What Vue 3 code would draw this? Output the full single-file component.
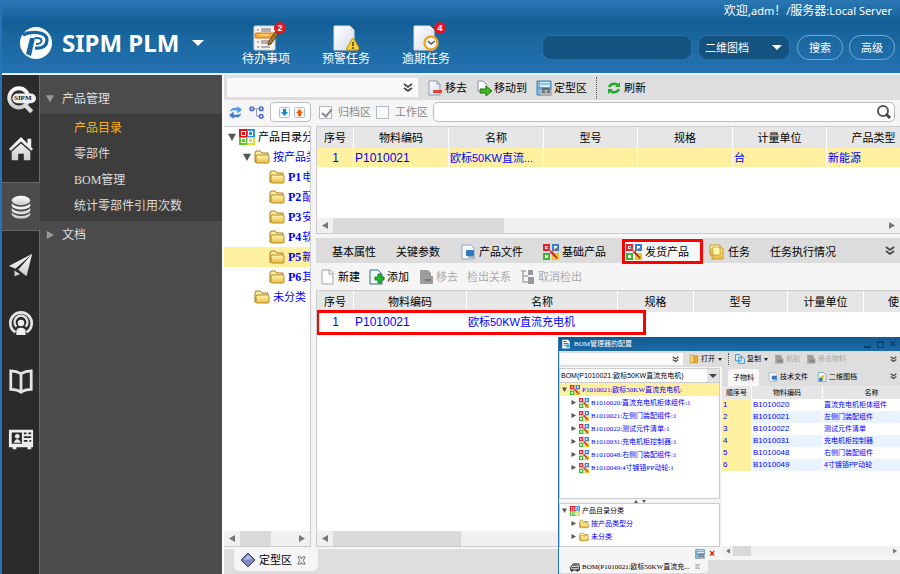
<script setup>
import { ref } from 'vue'

const shortcuts = [
  { label: '待办事项', icon: 'i-todo', count: 2 },
  { label: '预警任务', icon: 'i-warn' },
  { label: '逾期任务', icon: 'i-late', count: 4 },
]
const rail = ['search', 'home', 'data', 'plane', 'cast', 'book', 'card']
const railNames = ['检索', '首页', '数据', '发送', '广播', '手册', '名片']
const menu = ['产品目录', '零部件', 'BOM管理', '统计零部件引用次数']
const tools = [
  { label: '移去', icon: 'i-minus' },
  { label: '移动到', icon: 'i-moveto' },
  { label: '定型区', icon: 'i-disk' },
]
const tree = [
  { label: '产品目录分', level: 1, icon: 'i-grid', open: true, root: true },
  { label: '按产品类', level: 2, icon: 'i-folder', open: true },
  { code: 'P1', label: '电', level: 3, icon: 'i-folder' },
  { code: 'P2', label: '配', level: 3, icon: 'i-folder' },
  { code: 'P3', label: '安', level: 3, icon: 'i-folder' },
  { code: 'P4', label: '软', level: 3, icon: 'i-folder' },
  { code: 'P5', label: '新', level: 3, icon: 'i-folder', active: true },
  { code: 'P6', label: '其', level: 3, icon: 'i-folder' },
  { label: '未分类', level: 2, icon: 'i-folder' },
]
const tabs = [
  { label: '基本属性' },
  { label: '关键参数' },
  { label: '产品文件', icon: 'i-doc' },
  { label: '基础产品', icon: 'i-product' },
  { label: '发货产品', icon: 'i-product', active: true },
  { label: '任务', icon: 'i-task' },
  { label: '任务执行情况' },
]
const actions = [
  { label: '新建', icon: 'i-new' },
  { label: '添加', icon: 'i-add' },
  { label: '移去', icon: 'i-graypage', off: true },
  { label: '检出关系', off: true },
  { label: '取消检出', icon: 'i-graytree', off: true },
]
const bomTree = [
  'B1010020:直流充电机柜体组件:1',
  'B1010021:左侧门装配组件:1',
  'B1010022:测试元件清单:1',
  'B1010031:充电机柜控制器:1',
  'B1010048:右侧门装配组件:1',
  'B1010049:4寸镀铬PP动轮:1',
]
const bomRows = [
  ['B1010020', '直流充电机柜体组件'],
  ['B1010021', '左侧门装配组件'],
  ['B1010022', '测试元件清单'],
  ['B1010031', '充电机柜控制器'],
  ['B1010048', '右侧门装配组件'],
  ['B1010049', '4寸镀铬PP动轮'],
]
const archived = ref(true)
const working = ref(false)
</script>

<template>
  <svg class="sprite" width="0" height="0" aria-hidden="true">
    <defs>
      <linearGradient id="g-page" x1="0" y1="0" x2="1" y2="1"><stop offset="0" stop-color="#fff" /><stop offset="1" stop-color="#d5dde8" /></linearGradient>
      <linearGradient id="g-fold" x1="0" y1="0" x2="0" y2="1"><stop offset="0" stop-color="#fff7b8" /><stop offset="1" stop-color="#e9bd3f" /></linearGradient>
      <linearGradient id="g-rail" x1="0" y1="0" x2="0" y2="1"><stop offset="0" stop-color="#fff" /><stop offset="1" stop-color="#ccc" /></linearGradient>
    </defs>
    <symbol id="i-logo" viewBox="0 0 32 32">
      <circle cx="16" cy="16" r="16" fill="#fff" />
      <path d="M3 8C10 4 27 4 27 13c0 6-5 9-12 8" fill="none" stroke="#1566a3" stroke-width="3.200" />
      <path d="M10 11h5l-4 18-5-2z" fill="#1566a3" />
      <path d="M15 11c9-1 8 6 1 6" fill="none" stroke="#1566a3" stroke-width="2" />
      <path d="M2 7h9M4 5h5" stroke="#1566a3" stroke-dasharray="1 1" />
    </symbol>
    <symbol id="i-todo" viewBox="0 0 26 26">
      <rect x="1" y="1" width="21" height="24" rx="1" fill="#f5f3ee" stroke="#c9d3da" />
      <g stroke="#999" stroke-width="1.500"><path d="M4 5h2M8 4h10M8 6h10M4 17h2M8 16h9M8 18h9M4 22h2M8 22h9" /></g>
      <rect x="2" y="8" width="19" height="5" rx="1" fill="#f8a63a" stroke="#d17b18" /><path d="M6 10h10" stroke="#fff0b0" />
      <path d="M22 7l3 2-7 10-3 1 1-4z" fill="#a8782c" stroke="#5f4216" />
    </symbol>
    <symbol id="i-warn" viewBox="0 0 26 26">
      <path d="M1 1h16l4 4v20H1z" fill="url(#g-page)" stroke="#d8e0e5" /><path d="M17 1v5h4" fill="#d9e3ec" />
      <path d="M19 14q1-1 2 0l5 9q0 2-1 2H14q-1-1 0-2z" fill="#f8cf35" stroke="#c39310" /><path d="M20 17v4M20 22v2" stroke="#503e10" stroke-width="1.500" />
    </symbol>
    <symbol id="i-late" viewBox="0 0 26 26">
      <path d="M1 1h16l4 4v20H1z" fill="url(#g-page)" stroke="#d8e0e5" />
      <circle cx="18" cy="18" r="6.500" fill="#f7f9fb" stroke="#eda52e" stroke-width="2.400" /><path d="M15 16l3 3 4-3" fill="none" stroke="#555" stroke-width="1.500" />
    </symbol>
    <symbol id="r-search" viewBox="0 0 28 28">
      <circle cx="12" cy="12" r="9" fill="none" stroke="url(#g-rail)" stroke-width="3.600" /><path d="M18 19l6 6" stroke="#ddd" stroke-width="4" />
      <rect x="6" y="8" width="22" height="9" rx="4.500" fill="#eee" />
    </symbol>
    <symbol id="r-home" viewBox="0 0 28 28"><path d="M14 1L1 14l2 2L14 6l11 10 2-2-2-2V3h-4v5zM14 8l-10 9v9h7v-7h6v7h7v-9z" fill="url(#g-rail)" /></symbol>
    <symbol id="r-data" viewBox="0 0 28 28"><ellipse cx="14" cy="7" rx="10" ry="5" fill="url(#g-rail)" /><path d="M4 10c3 5 17 5 20 0v3c-2 5-18 5-20 0zM4 15c3 5 17 5 20 0v3c-2 5-18 5-20 0zM4 20c3 5 17 5 20 0v2c-2 6-18 6-20 0z" fill="url(#g-rail)" /></symbol>
    <symbol id="r-plane" viewBox="0 0 28 28"><path d="M26 2L1 15l7 3zM26 2L11 19l9 7zM7 20l6 4-6 2z" fill="url(#g-rail)" /></symbol>
    <symbol id="r-cast" viewBox="0 0 28 28"><g fill="none" stroke="#e4e4e4"><path d="M8 24a11.500 11.500 0 1 1 12 0" stroke-width="3" /><path d="M9 18a7 7 0 1 1 10 0" stroke-width="2.500" /></g><circle cx="14" cy="14" r="3.500" fill="#eee" /><path d="M9 27v-4q0-4 5-4t5 4v4z" fill="#eee" /></symbol>
    <symbol id="r-book" viewBox="0 0 28 28"><path d="M3 3q6 0 11 3 5-3 11-3v20q-7 0-11 3-4-3-11-3zM14 6v19" fill="none" stroke="#e4e4e4" stroke-width="3" /></symbol>
    <symbol id="r-card" viewBox="0 0 28 28"><path d="M1 4h26v19h-2v2h-4v-2H9v2H5v-2H1zM4 7v12h11V7zM17 7v2h3V7zM22 7v2h3V7zM17 11v2h8v-2zM17 15v2h4v-2zM23 15v2h2v-2z" fill="#eee" fill-rule="evenodd" /><circle cx="10" cy="11" r="2.500" fill="#eee" /><path d="M6 18q4-8 8 0z" fill="#eee" /></symbol>
    <symbol id="i-sync" viewBox="0 0 16 16"><path d="M2 7q1-5 8-4V1l5 4-5 4V6Q6 5 2 7z" fill="#4f9bea" /><path d="M14 9q-1 5-8 4v2l-5-4 5-4v3q4 1 8-1z" fill="#3a7bdc" /></symbol>
    <symbol id="i-nodes" viewBox="0 0 16 16"><path d="M4 4h8M8 4v8h4" fill="none" stroke="#8c95a8" /><g fill="#b7cbff" stroke="#4a66c9" stroke-width="1.500"><circle cx="3" cy="4" r="2" /><circle cx="13" cy="4" r="2" /><circle cx="13" cy="12" r="2" /></g></symbol>
    <symbol id="i-down" viewBox="0 0 11 11"><rect x=".5" y=".5" width="10" height="10" rx="1" fill="#eef7ff" stroke="#a9c0d8" /><path d="M4 2h3v3h2L5.500 9 2 5h2z" fill="#1489c0" /></symbol>
    <symbol id="i-up" viewBox="0 0 11 11"><rect x=".5" y=".5" width="10" height="10" rx="1" fill="#fff3ec" stroke="#a9c0d8" /><path d="M4 9h3V6h2L5.500 2 2 6h2z" fill="#f05a0c" /></symbol>
    <symbol id="i-grid" viewBox="0 0 16 16"><rect width="8" height="8" fill="#e60f12" /><rect x="8" width="8" height="8" fill="#2a92e0" /><rect y="8" width="8" height="8" fill="#5cc72c" /><rect x="8" y="8" width="8" height="8" fill="#e2dc2b" /><g stroke="#fff" fill="none"><rect x="2.500" y="2.500" width="4" height="4" /><rect x="9.500" y="2.500" width="4" height="4" /><rect x="2.500" y="9.500" width="4" height="4" /><rect x="9.500" y="9.500" width="4" height="4" /></g></symbol>
    <symbol id="i-product" viewBox="0 0 16 16"><g fill="#fff" stroke-width="2"><rect x="1" y="1" width="5" height="5" stroke="#e02030" /><rect x="10" y="1" width="5" height="5" stroke="#2f80df" /><rect x="1" y="10" width="5" height="5" stroke="#39b52b" /><rect x="10" y="10" width="5" height="5" stroke="#e3c51e" /></g><path d="M3 3l2 1 9 10M14 4L7 9" stroke="#b06a5a" stroke-width="1.500" fill="none" /><path d="M8 8l6 6" stroke="#d22a2a" stroke-width="2" /></symbol>
    <symbol id="i-folder" viewBox="0 0 16 16"><path d="M1 13V4l1-2h4l2 2h6v9z" fill="url(#g-fold)" stroke="#a57b18" /><path d="M3 6h11l1 1v6q0 1-1 1H3q-1 0-1-1V7z" fill="url(#g-fold)" stroke="#b98c22" /></symbol>
    <symbol id="i-minus" viewBox="0 0 16 16"><path d="M2 1h8l3 3v11H2z" fill="url(#g-page)" stroke="#8e9aac" /><path d="M10 1v3h3" fill="none" stroke="#8e9aac" /><rect x="6" y="10" width="9" height="3" fill="#e8413a" /></symbol>
    <symbol id="i-moveto" viewBox="0 0 16 16"><path d="M2 12V1h5l3 3v4" fill="#fff" stroke="#8491a8" /><path d="M4 9h6V6l6 5-6 5v-3H4z" fill="#42b71d" stroke="#1b7510" /></symbol>
    <symbol id="i-disk" viewBox="0 0 16 16"><path d="M1 1h14v14H1z" fill="#7fb6dc" stroke="#3b7fb4" /><rect x="4" y="2" width="10" height="5" fill="#d9effc" /><path d="M4 4h10M2 8h12" stroke="#3f8fca" /><rect x="4" y="9" width="12" height="6" rx="2" fill="#b5b5b5" /><path d="M6 12h3M11 12h3M6 10l2-1h4l2 1" fill="none" stroke="#555" stroke-width="1.500" /></symbol>
    <symbol id="i-reload" viewBox="0 0 16 16"><g fill="none" stroke="#23a82c" stroke-width="2.400"><path d="M3 7q2-4 7-3l2 1M13 9q-2 4-7 3l-2-1" /></g><path d="M14 2v5H9zM2 14V9h5z" fill="#23a82c" /></symbol>
    <symbol id="i-find" viewBox="0 0 16 16"><circle cx="7" cy="7" r="5" fill="none" stroke="#555" stroke-width="2" /><path d="M10 10l4 4" stroke="#444" stroke-width="3" /></symbol>
    <symbol id="i-doc" viewBox="0 0 16 16"><path d="M2 1h9l3 3v11H2z" fill="#f6f9fd" stroke="#97a5ba" /><rect x="6" y="6" width="8" height="6" rx="1" fill="#3279bf" /><path d="M8 13h6" stroke="#7895b8" stroke-width="1.500" /></symbol>
    <symbol id="i-task" viewBox="0 0 16 16"><path d="M1 1h10v10H1zM3 4h11v11H3z" fill="url(#g-fold)" stroke="#c99a28" /><path d="M4 3h5l2 2v6H4z" fill="#fff6b4" stroke="#d9b448" /></symbol>
    <symbol id="i-new" viewBox="0 0 16 16"><path d="M2 1h8l3 3v11H2z" fill="#fcfcfc" stroke="#a5a5a5" /><path d="M9 1v4h4" fill="none" stroke="#a5a5a5" /></symbol>
    <symbol id="i-add" viewBox="0 0 16 16"><path d="M1 1h8l4 4v10H1z" fill="#f3f9ff" stroke="#35658f" /><path d="M9 5h3v3h3v3h-3v3H9v-3H6V8h3z" fill="#25bd2c" stroke="#118018" /></symbol>
    <symbol id="i-graypage" viewBox="0 0 16 16"><path d="M2 1h8l3 3v3h2v8H2z" fill="#9c9c9c" /><path d="M7 11h6" stroke="#777" stroke-width="2" /></symbol>
    <symbol id="i-graytree" viewBox="0 0 16 16"><path d="M1 2h5M3 2v11h5M3 7h5" fill="none" stroke="#aaa" stroke-width="1.500" /><path d="M8 1h5v5H8zM8 8h6v7H8z" fill="#999" /></symbol>
    <symbol id="i-more" viewBox="0 0 10 10"><path d="M1 1l4 3 4-3M1 5l4 3 4-3" fill="none" stroke="#444" stroke-width="1.700" /></symbol>
    <symbol id="i-diamond" viewBox="0 0 16 16"><path d="M8 1l7 7-7 7-7-7z" fill="#8287c4" stroke="#3c3f66" /><path d="M8 3l4 4-8 1z" fill="#b6b9e4" /></symbol>
    <symbol id="i-copy" viewBox="0 0 16 16"><path d="M1 1h6l3 3v7H1zM6 5h6l3 3v7H6z" fill="#e5f5ff" stroke="#2e8bd0" stroke-width="1.500" /></symbol>
    <symbol id="i-open" viewBox="0 0 16 16"><path d="M2 2h6v12H2z" fill="#f8dc78" stroke="#b98c22" /><path d="M8 3h6v11H8z" fill="#e9ad31" stroke="#b98c22" /></symbol>
    <symbol id="i-cad" viewBox="0 0 16 16"><path d="M2 1h9l3 3v11H2z" fill="#fff" stroke="#4b82b8" /><path d="M4 14V8l8-4-2 9z" fill="#f0bd27" /><circle cx="6" cy="12" r="3" fill="#2b7fc6" /></symbol>
    <symbol id="i-car" viewBox="0 0 16 16"><path d="M1 8l4-5h9l1 5v5H1z" fill="#ccc" stroke="#222" stroke-width="1.500" /><path d="M5 5h7M3 9h10" stroke="#333" stroke-width="1.500" /><path d="M3 12v3M12 12v3" stroke="#222" stroke-width="3" /></symbol>
    <symbol id="i-close" viewBox="0 0 10 10"><path d="M1 1h3l1 2 1-2h3L7 5l2 4H6L5 7 4 9H1l2-4z" fill="none" stroke="currentColor" /></symbol>
    <symbol id="i-app" viewBox="0 0 16 16"><path d="M2 1h9l3 3v11H2z" fill="#fff" /><path d="M4 4h5M4 7h8M4 10h4" stroke="#555" stroke-width="1.500" /><circle cx="11" cy="11" r="3" fill="#41a7e2" /></symbol>
  </svg>

  <div class="app">
    <header class="top">
      <div class="brand">
        <svg class="logo"><use href="#i-logo" /></svg>
        <h1>SIPM PLM</h1>
        <button class="caret" aria-label="切换"></button>
      </div>
      <nav class="shortcuts">
        <a v-for="s in shortcuts" :key="s.label" href="#">
          <span class="pic"><svg><use :href="'#' + s.icon" /></svg><b v-if="s.count">{{ s.count }}</b></span>
          {{ s.label }}
        </a>
      </nav>
      <div class="account">
        <p><span>欢迎,</span>adm<span>！</span>/<span>服务器</span>:Local Server</p>
        <form class="query" @submit.prevent>
          <input type="text" aria-label="关键字" />
          <span class="pick"><select aria-label="类型"><option>二维图档</option></select></span>
          <button>搜索</button>
          <button type="button">高级</button>
        </form>
      </div>
    </header>

    <div class="body">
      <nav class="rail">
        <a v-for="(r, i) in rail" :key="r" href="#" :aria-label="railNames[i]" :class="{ on: r === 'data' }">
          <svg :class="{ big: r === 'search' }"><use :href="'#r-' + r" /></svg>
          <span v-if="r === 'search'" class="tag">SIPM</span>
        </a>
      </nav>
      <nav class="side">
        <button class="group first"><i class="tri open"></i>产品管理</button>
        <div class="items">
          <a v-for="(m, i) in menu" :key="m" href="#" :class="{ on: i === 0 }">{{ m }}</a>
        </div>
        <button class="group"><i class="tri"></i>文档</button>
      </nav>

      <main class="main">
        <div class="toolbar">
          <span class="combo"><select aria-label="视图"></select><svg><use href="#i-more" /></svg></span>
          <button v-for="t in tools" :key="t.label"><svg><use :href="'#' + t.icon" /></svg>{{ t.label }}</button>
          <i class="dots"></i>
          <button><svg><use href="#i-reload" /></svg>刷新</button>
        </div>

        <div class="filter">
          <button aria-label="同步"><svg><use href="#i-sync" /></svg></button>
          <button aria-label="结构"><svg><use href="#i-nodes" /></svg></button>
          <span class="updown">
            <button aria-label="下移"><svg><use href="#i-down" /></svg></button>
            <button aria-label="上移"><svg><use href="#i-up" /></svg></button>
          </span>
          <label><input v-model="archived" type="checkbox" />归档区</label>
          <label><input v-model="working" type="checkbox" />工作区</label>
          <span class="find"><input type="text" aria-label="查找" /><svg><use href="#i-find" /></svg></span>
        </div>

        <div class="work">
          <section class="treepane">
            <ul>
              <li v-for="n in tree" :key="n.code || n.label" :class="['l' + n.level, { on: n.active, root: n.root }]">
                <i class="tri" :class="{ open: n.open, none: !n.open }"></i>
                <svg><use :href="'#' + n.icon" /></svg>
                <span><b v-if="n.code">{{ n.code }}</b>{{ n.label }}</span>
              </li>
            </ul>
            <div class="scroll"><i class="arr left"></i><i class="thumb short"></i><i class="arr right"></i></div>
          </section>

          <section class="panes">
            <div class="pane upper">
              <div class="clip">
                <table class="grid t1">
                  <colgroup><col class="c38" /><col class="c95" /><col class="c95" /><col class="c94" /><col class="c95" /><col class="c94" /><col class="c94" /></colgroup>
                  <thead><tr><th>序号</th><th>物料编码</th><th>名称</th><th>型号</th><th>规格</th><th>计量单位</th><th>产品类型</th></tr></thead>
                  <tbody><tr class="sel"><td class="num">1</td><td class="code">P1010021</td><td>欧标50KW直流...</td><td></td><td></td><td>台</td><td>新能源</td></tr></tbody>
                </table>
              </div>
              <div class="scroll"><i class="arr left"></i><i class="thumb mid"></i><i class="arr right"></i></div>
            </div>

            <div class="tabs">
              <button v-for="t in tabs" :key="t.label" :class="{ on: t.active }">
                <svg v-if="t.icon"><use :href="'#' + t.icon" /></svg>{{ t.label }}
              </button>
              <svg class="more"><use href="#i-more" /></svg>
            </div>
            <div class="actions">
              <button v-for="a in actions" :key="a.label" :disabled="a.off">
                <svg v-if="a.icon"><use :href="'#' + a.icon" /></svg>{{ a.label }}
              </button>
            </div>
            <div class="pane lower">
              <div class="clip">
                <table class="grid t2">
                  <colgroup><col class="c38" /><col class="c113" /><col class="c151" /><col class="c76" /><col class="c94" /><col class="c76" /><col class="c60" /></colgroup>
                  <thead><tr><th>序号</th><th>物料编码</th><th>名称</th><th>规格</th><th>型号</th><th>计量单位</th><th>使</th></tr></thead>
                  <tbody><tr><td class="num">1</td><td class="code">P1010021</td><td>欧标50KW直流充电机</td><td></td><td></td><td></td><td></td></tr></tbody>
                </table>
                <i class="mark"></i>
              </div>
              <div class="scroll"><i class="arr left"></i><i class="thumb low"></i><i class="arr right"></i></div>
            </div>
          </section>
        </div>

        <footer class="dock"><button><svg><use href="#i-diamond" /></svg>定型区<svg class="x"><use href="#i-close" /></svg></button></footer>
      </main>
    </div>

    <section class="win">
      <header class="title">
        <svg><use href="#i-app" /></svg><h2>BOM管理器的配置</h2>
        <button aria-label="最小化"><i class="min"></i></button>
        <button aria-label="最大化"><i class="max"></i></button>
        <button aria-label="关闭">✕</button>
      </header>
      <div class="wbar">
        <span class="combo"><select aria-label="窗口视图"></select><svg><use href="#i-more" /></svg></span>
        <button><svg><use href="#i-open" /></svg>打开<i class="dd"></i></button>
        <i class="dots"></i>
        <button><svg><use href="#i-copy" /></svg>复制<i class="dd"></i></button>
        <button disabled><svg><use href="#i-graypage" /></svg>粘贴</button>
        <button disabled><svg><use href="#i-graypage" /></svg>移去物料</button>
        <svg class="more"><use href="#i-more" /></svg>
      </div>
      <div class="wbody">
        <div class="wleft">
          <span class="pickbom"><select aria-label="BOM"><option>BOM(P1010021:欧标50KW直流充电机)</option></select><i class="drop"></i></span>
          <ul class="wtree grow">
            <li class="on"><i class="tri open"></i><svg><use href="#i-product" /></svg>P1010021:欧标50KW直流充电机:</li>
            <li v-for="b in bomTree" :key="b" class="sub"><i class="tri"></i><svg><use href="#i-product" /></svg>{{ b }}</li>
          </ul>
          <div class="split"><i class="up"></i><i class="dn"></i></div>
          <ul class="wtree cats">
            <li class="root"><i class="tri open"></i><svg><use href="#i-grid" /></svg>产品目录分类</li>
            <li class="sub"><i class="tri"></i><svg><use href="#i-folder" /></svg>按产品类型分</li>
            <li class="sub"><i class="tri"></i><svg><use href="#i-folder" /></svg>未分类</li>
          </ul>
          <div class="wfoot"><svg><use href="#i-disk" /></svg><button aria-label="清除">×</button></div>
        </div>
        <div class="wright">
          <div class="wtabs">
            <button class="on">子物料</button>
            <button><svg><use href="#i-doc" /></svg>技术文件</button>
            <button><svg><use href="#i-cad" /></svg>二维图档</button>
            <svg class="more"><use href="#i-more" /></svg>
          </div>
          <div class="clip wclip">
            <table class="wgrid">
              <colgroup><col class="c30" /><col class="c71" /><col class="c98" /></colgroup>
              <thead><tr><th>顺序号</th><th>物料编码</th><th>名称</th></tr></thead>
              <tbody>
                <tr v-for="(r, i) in bomRows" :key="r[0]"><td class="no">{{ i + 1 }}</td><td class="code">{{ r[0] }}</td><td>{{ r[1] }}</td></tr>
              </tbody>
            </table>
          </div>
          <div class="scroll small"><i class="arr left"></i><i class="thumb tiny"></i><i class="arr right"></i></div>
        </div>
      </div>
      <footer class="wdock"><button><svg><use href="#i-car" /></svg>BOM(P1010021:欧标50KW直流充...<svg class="x"><use href="#i-close" /></svg></button></footer>
    </section>
  </div>
</template>

<style>
body { margin: 0; }
</style>

<style scoped>
* { box-sizing: border-box; }
.sprite { position: absolute; }
button, input, select { font: inherit; color: inherit; margin: 0; padding: 0; border: 0; background: none; border-radius: 0; }
button { white-space: nowrap; display: flex; align-items: center; }
select { appearance: none; outline: 0; }
ul { list-style: none; margin: 0; padding: 0; }
a { color: inherit; text-decoration: none; }
svg { flex: none; width: 16px; height: 16px; }
.app {
  position: relative; min-height: 100vh; display: flex; flex-direction: column; overflow: hidden;
  border-left: 2px solid #2474b5;
  font: 11px/16px "Liberation Sans", "Noto Sans CJK SC", sans-serif; color: #000;
}
.top {
  height: 75px; flex: none; display: flex; color: #fff; border-bottom: 2px solid #e8f1f8;
  background: linear-gradient(#2a77b4, #115d95 32%, #1a679f 50%, #2371b0);
}
.brand { width: 240px; flex: none; display: flex; align-items: center; padding: 12px 0 0 18px; gap: 10px; }
.logo { width: 32px; height: 32px; }
h1 { margin: 0; font: bold 24px/32px "Noto Sans", sans-serif; }
.caret { border: 6px solid transparent; border-top-color: #fff; border-bottom: 0; margin-left: 3px; }
.shortcuts { display: flex; gap: 32px; font-size: 12px; padding-top: 25px; }
.shortcuts a { display: flex; flex-direction: column; align-items: center; white-space: nowrap; line-height: 16px; }
.pic { position: relative; height: 26px; }
.pic svg { width: 26px; height: 26px; display: block; }
.pic b {
  position: absolute; top: -3px; right: -7px; width: 12px; height: 12px; border-radius: 6px;
  background: #df1722; font-size: 9px; line-height: 12px; text-align: center;
}
.account { margin-left: auto; padding: 2px 5px 0 0; text-align: right; }
.account p { margin: 0 3px 0 0; font: 11px/18px "Noto Sans", "Noto Sans CJK SC", sans-serif; }
.account p span { font-size: 12px; }
.query { display: flex; align-items: center; gap: 6px; padding-top: 15px; }
.query input { width: 150px; height: 25px; border-radius: 9px; background: #14527f; border: 1px solid #2b6fa5; }
.pick { position: relative; display: block; margin-right: 1px; }
.pick select { width: 92px; height: 25px; padding-left: 6px; border-radius: 9px; background: #14527f; border: 1px solid #2b6fa5; display: block; }
.pick::after { content: ""; position: absolute; right: 8px; top: 10px; border: 5px solid transparent; border-top-color: #fff; border-bottom: 0; }
.query button { width: 46px; height: 25px; border: 1px solid #74aad2; border-radius: 12px; justify-content: center; }

.body { flex: 1; display: flex; }
.rail { width: 38px; flex: none; background: #2b2b2b; border-right: 1px solid #6a6a6a; display: flex; flex-direction: column; gap: 9px; }
.rail a { position: relative; height: 49px; display: flex; align-items: center; justify-content: center; }
.rail a:first-child { margin-bottom: -9px; }
.rail a.on { background: #4b4b4b; border-top: 1px solid #666; border-bottom: 1px solid #666; margin-right: -1px; }
.rail svg { width: 26px; height: 26px; }
.rail svg.big { width: 30px; height: 30px; }
.tag { position: absolute; left: 12px; top: 18px; color: #222; font: bold 7px/10px "Liberation Serif", serif; }
.side { width: 182px; flex: none; background: #4b4b4b; color: #ddd; font: 12px/16px "Liberation Serif", "Noto Sans CJK SC", serif; }
.group { width: 100%; height: 28px; padding-left: 6px; gap: 8px; }
.group.first { height: 39px; padding-top: 8px; }
.items { background: #3d3d3d; padding: 1px 0 2px; }
.items a { display: block; padding-left: 34px; line-height: 26px; }
.items a.on { color: #f9b31c; }
.tri { flex: none; width: 8px; height: 8px; background: #999; clip-path: polygon(10% 0, 100% 50%, 10% 100%); }
.tri.open { clip-path: polygon(0 10%, 100% 10%, 50% 100%); }
.tri.none { visibility: hidden; }

.main { flex: 1; min-width: 0; display: flex; flex-direction: column; background: #f5f5f5; border-left: 2px solid #fff; }
.toolbar { height: 25px; flex: none; display: flex; align-items: center; gap: 9px; padding-left: 3px; background: #dedede; }
.combo { position: relative; display: block; }
.combo select { display: block; width: 191px; height: 19px; background: #fafafa; }
.combo svg { position: absolute; right: 5px; top: 5px; width: 10px; height: 10px; pointer-events: none; }
.toolbar button { gap: 2px; }
.dots { height: 22px; border-left: 1px dotted #555; }
.filter { height: 26px; flex: none; display: flex; align-items: center; padding: 0 5px 2px 4px; color: #888; }
.filter > button { margin-right: 6px; }
.filter > button svg { width: 15px; height: 15px; }
.updown { width: 41px; height: 20px; margin-right: 8px; display: flex; align-items: center; justify-content: flex-end; gap: 4px; padding-right: 5px; background: #fff; border: 1px solid #bbb; border-radius: 4px; }
.updown svg { width: 11px; height: 11px; }
.filter label { display: flex; align-items: center; gap: 6px; margin-right: 5px; }
.filter label input { appearance: none; width: 13px; height: 13px; border: 1px solid #b4bac4; background: #fafafa; position: relative; }
.filter label input:checked::after { content: ""; position: absolute; left: 4px; top: 0; width: 4px; height: 8px; border: solid #888; border-width: 0 2px 2px 0; rotate: 40deg; }
.find { flex: 1; position: relative; display: block; }
.find input { display: block; width: 100%; height: 20px; border: 1px solid #bbb; border-radius: 5px; background: #fff; }
.find svg { position: absolute; right: 3px; top: 2px; }

.work { flex: 1; min-height: 0; display: flex; gap: 5px; }
.treepane { width: 87px; flex: none; display: flex; flex-direction: column; background: #fff; border: 1px solid #ccc; border-left: 0; overflow: hidden; }
.treepane ul { flex: 1; color: #00f; }
.treepane li { height: 20px; display: flex; align-items: center; gap: 3px; white-space: nowrap; padding-left: 4px; }
.treepane li span { min-width: 0; overflow: hidden; }
.treepane li b { font: bold 12px/16px "Liberation Serif", serif; margin-right: 1px; }
.treepane li.l2 { padding-left: 19px; }
.treepane li.l3 { padding-left: 34px; }
.treepane li.root { color: #000; }
.treepane li.on { background: #fff09f; }
.treepane .tri, .wtree .tri { background: #555; }
.scroll { height: 15px; flex: none; display: flex; align-items: center; background: #f0f0f0; }
.arr { flex: none; width: 6px; height: 7px; margin: 0 5px; background: #777; clip-path: polygon(0 0, 100% 50%, 0 100%); }
.arr.left { clip-path: polygon(100% 0, 0 50%, 100% 100%); }
.arr.right { margin-left: auto; }
.thumb { height: 100%; background: #dadada; }
.thumb.short { width: 31px; }
.thumb.mid { width: 171px; }
.thumb.low { width: 22%; }
.thumb.tiny { width: 18px; }

.panes { flex: 1; min-width: 0; display: flex; flex-direction: column; }
.pane { display: flex; flex-direction: column; background: #fff; border: 1px solid #ccc; border-width: 1px 0 1px 1px; min-width: 0; }
.upper { flex: 0 0 108px; margin-bottom: 4px; }
.lower { flex: 1; }
.clip { flex: 1; overflow: hidden; position: relative; }
.grid, .wgrid { table-layout: fixed; border-collapse: separate; border-spacing: 0; }
.t1 { width: 604px; min-width: 102%; }
.t2 { width: 607px; min-width: 102%; }
.c38 { width: 37px; } .c95 { width: 95px; } .c94 { width: 94px; } .c113 { width: 113px; } .c151 { width: 151px; } .c76 { width: 76px; } .c60 { width: 60px; }
.c30 { width: 30px; } .c71 { width: 71px; } .c98 { width: 98px; }
th { font-weight: normal; padding: 0; background: #e6e6e6; border-right: 1px solid #fff; white-space: nowrap; }
.grid th { height: 21px; }
td { padding: 0 0 0 1px; color: #00f; white-space: nowrap; overflow: hidden; border-right: 1px solid #fff; }
.grid td { height: 19px; }
.grid td.code, .grid td.num { font-size: 12px; }
td.num { text-align: center; }
.sel td { background: #fff09f; }
.mark { position: absolute; left: -1px; top: 19px; width: 330px; height: 25px; border: 3px solid #f00; }
.tabs { height: 25px; flex: none; display: flex; background: #dcdcdc; padding-left: 6px; }
.tabs button { position: relative; padding: 2px 10px 0; gap: 3px; }
.tabs button.on { isolation: isolate; }
.tabs button.on::before { content: ""; position: absolute; z-index: -1; inset: 0 -4px -1px 6px; background: #f8f8f8; }
.tabs button.on::after { content: ""; position: absolute; inset: 1px -4px -1px 6px; border: 3px solid #f00; }
.more { width: 10px; height: 10px; margin: auto 5px auto auto; }
.actions { height: 27px; flex: none; display: flex; align-items: center; gap: 9px; padding-left: 4px; }
.actions button { gap: 2px; }
button:disabled { color: #aaa; }
.dock { height: 25px; flex: none; background: #dedede; padding-left: 10px; margin-top: 2px; display: flex; }
.dock button { height: 22px; padding: 0 12px 0 6px; gap: 3px; background: #f5f5f5; border-radius: 0 0 5px 5px; }
.dock .x { width: 9px; height: 9px; margin-left: 2px; color: #666; }

.win {
  position: absolute; left: 556px; right: 0; top: 337px; bottom: 0; display: flex; flex-direction: column;
  background: #f5f5f5; border-left: 1px solid #2474b5; font-size: 7px; line-height: 12px;
}
.win svg { width: 10px; height: 10px; }
.title { height: 14px; flex: none; display: flex; align-items: center; gap: 3px; padding: 0 2px; color: #fff; background: linear-gradient(#115a91, #1d6ba6); }
h2 { margin: 0 auto 0 0; font: 7px/12px "Liberation Serif", "Noto Sans CJK SC", serif; }
.title button { width: 10px; height: 12px; justify-content: center; color: #0c3e68; font-size: 9px; font-weight: bold; }
.min { width: 7px; height: 7px; border-bottom: 2px solid #0c3e68; }
.max { width: 7px; height: 7px; border: 1px solid #0c3e68; border-top-width: 2px; }
.wbar { height: 16px; flex: none; display: flex; align-items: center; gap: 6px; padding-left: 1px; background: #dedede; }
.wbar .combo select { width: 123px; height: 12px; }
.wbar .combo svg { width: 7px; height: 7px; top: 3px; right: 4px; }
.wbar .dots { height: 12px; }
.wbar button { gap: 2px; }
.dd { border: 2px solid transparent; border-top: 3px solid #222; border-bottom: 0; margin-left: 1px; }
.win .more { width: 7px; height: 7px; margin-right: 3px; }
.wbody { flex: 1; display: grid; grid-template-columns: 161px minmax(0, 1fr); gap: 2px; }
.wleft, .wright { display: flex; flex-direction: column; min-width: 0; }
.pickbom { position: relative; display: block; flex: none; padding-top: 1px; }
.pickbom select { display: block; width: 100%; height: 15px; padding-left: 1px; background: #fff; border: 1px solid #ccc; }
.drop { position: absolute; right: 1px; top: 2px; width: 12px; height: 13px; background: #e2e2e2; pointer-events: none; }
.drop::after { content: ""; position: absolute; left: 2px; top: 5px; border: 4px solid transparent; border-top-color: #444; border-bottom: 0; }
.wtree { background: #fff; border: 1px solid #ccc; font-family: "Liberation Serif", "Noto Sans CJK SC", serif; color: #00f; overflow: hidden; }
.wtree.grow { flex: 1; border-top: 0; }
.wtree li { height: 13px; display: flex; align-items: center; gap: 2px; padding-left: 2px; white-space: nowrap; }
.wtree li.sub { padding-left: 11px; }
.wtree li.on { background: #fff09f; }
.wtree li.root { color: #000; }
.wtree .tri { width: 5px; height: 5px; margin-right: 1px; }
.split { height: 4px; flex: none; display: flex; justify-content: center; align-items: center; gap: 4px; }
.split i { border: 2px solid transparent; }
.split .up { border-bottom: 3px solid #555; border-top: 0; }
.split .dn { border-top: 3px solid #555; border-bottom: 0; }
.cats { height: 44px; flex: none; }
.wfoot { height: 13px; flex: none; display: flex; align-items: center; justify-content: flex-end; gap: 4px; padding-right: 5px; }
.wfoot button { color: #d00; font-size: 10px; font-weight: bold; }
.wtabs { height: 19px; flex: none; display: flex; align-items: center; gap: 9px; padding-left: 6px; background: #dedede; }
.wtabs button { height: 15px; gap: 2px; }
.wtabs button.on { background: #f8f8f8; align-self: flex-end; height: 17px; padding: 0 5px; border-radius: 4px 4px 0 0; }
.wclip { background: #fff; }
.wgrid { width: 199px; min-width: 102%; }
.wgrid th { height: 13px; }
.wgrid td { height: 12px; padding-left: 1px; line-height: 10px; }
.wgrid td.code, .wgrid td.no { font-size: 8px; }
.wgrid tr:nth-child(even) td { background: #e9f2ff; }
.wgrid tbody tr td.no { background: #fff09f; }
.small { height: 10px; margin-bottom: 4px; }
.small .arr { height: 5px; width: 4px; margin: 0 3px 0 4px; }
.small .arr.right { margin-left: auto; }
.wdock { height: 14px; flex: none; background: #dcdcdc; display: flex; }
.wdock button { padding: 0 8px 0 11px; gap: 2px; background: #f5f5f5; font-family: "Liberation Serif", "Noto Sans CJK SC", serif; border-radius: 0 0 4px 4px; height: 13px; }
.wdock .x { width: 5px; height: 5px; margin-left: 3px; color: #777; }
</style>
